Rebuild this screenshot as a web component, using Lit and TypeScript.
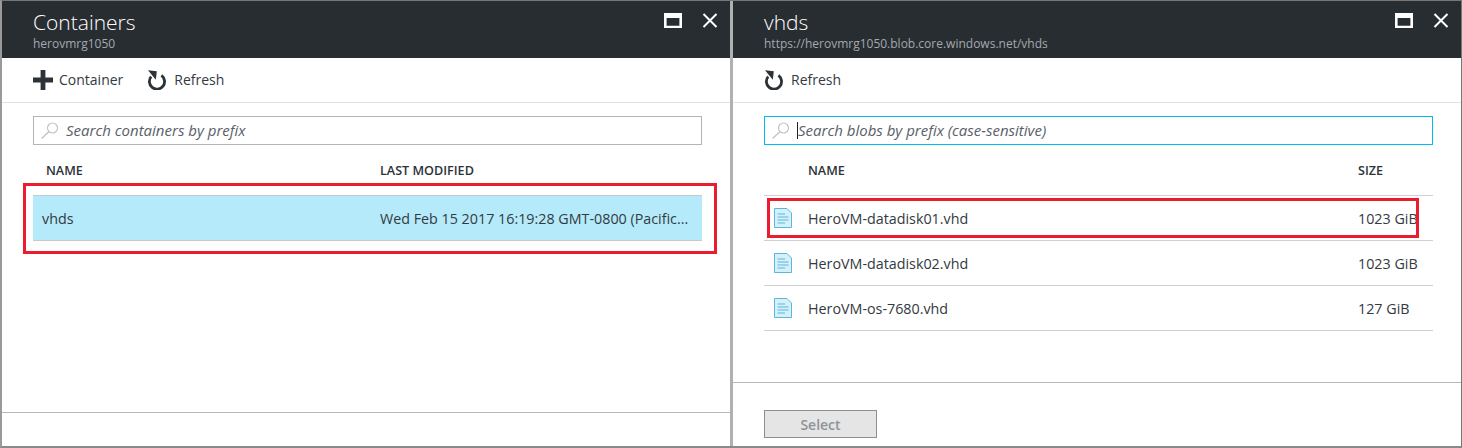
import { LitElement, html, css, svg } from 'lit';
import { customElement } from 'lit/decorators.js';

const refreshIcon = html`<svg class="tool-icon" viewBox="0 0 20 20"><path d="M14.4 5.4 A7.6 7.6 0 1 1 4.2 6.6" fill="none" stroke="#2b3238" stroke-width="2.8"/><path d="M1 .2 L9.8 1.2 L8.8 9.8 Z" fill="#2b3238"/></svg>`;
const plusIcon = html`<svg class="tool-icon" viewBox="0 0 20 20"><path d="M7.6 0H12.4V7.6H20V12.4H12.4V20H7.6V12.4H0V7.6H7.6Z" fill="#2b3238"/></svg>`;
const searchIcon = html`<svg class="search-icon" viewBox="0 0 18 18"><circle cx="11.5" cy="6" r="5" fill="none" stroke="#c4c4c4" stroke-width="1.2"/><path d="M7.8 9.8 L.6 16.6" stroke="#c4c4c4" stroke-width="1.4"/></svg>`;
const maxIcon = svg`<path d="M0 0H18V15H0ZM2.6 5V12.7H15.4V5Z" fill="#fff" fill-rule="evenodd"/>`;
const fileIcon = html`<svg class="file-icon" viewBox="0 0 18 20"><path d="M.5.5H13L17.5 5V19.5H.5Z" fill="#d6f0fa" stroke="#5ab7de"/><path d="M3.5 6H11M3.5 9H14.5M3.5 12H14.5M3.5 15H11" stroke="#5ab7de"/></svg>`;

const blobs = [
  ['HeroVM-datadisk01.vhd', '1023 GiB'],
  ['HeroVM-datadisk02.vhd', '1023 GiB'],
  ['HeroVM-os-7680.vhd', '127 GiB'],
];

@customElement('app-root')
export class AppRoot extends LitElement {
  static override styles = css`
    :host {
      display: block;
      position: relative;
      width: 1462px;
      height: 448px;
      box-sizing: border-box;
      overflow: hidden;
      background: #fff;
      color: #333a42;
      font-family: "Open Sans", "Noto Sans", sans-serif;
      font-size: 14.3px;
      border-top: 1px solid #777;
      border-left: 2px solid #9a9a9a;
      border-right: 1px solid #777;
      border-bottom: 2px solid #8a8a8a;
    }
    .blades {
      display: grid;
      grid-template-columns: 728px 3px 1fr;
      height: 100%;
    }
    .sep { background: #b0b0b0; }
    .blade { display: flex; flex-direction: column; min-width: 0; }
    .head {
      height: 57px;
      box-sizing: border-box;
      background: #282d32;
      padding: 8px 12px 0 31px;
      display: flex;
      justify-content: space-between;
      flex: none;
    }
    .title { color: #fff; font-size: 21px; line-height: 27px; font-weight: 300; }
    .sub { color: #a4a9ad; font-size: 12px; line-height: 15px; }
    .actions { display: flex; gap: 20px; padding-top: 4px; }
    .max { width: 18px; height: 15px; display: block; }
    .close { width: 16px; height: 15px; display: block; }
    .toolbar {
      height: 45px;
      box-sizing: border-box;
      border-bottom: 1px solid #e2e2e2;
      display: flex;
      align-items: center;
      gap: 24px;
      padding-left: 31px;
      flex: none;
    }
    .tool { display: flex; align-items: center; gap: 6px; font-size: 14px; }
    .tool.refresh { gap: 7px; }
    .tool span { margin-top: -2px; }
    .tool-icon { width: 20px; height: 20px; }
    .search {
      margin: 13px 28px 0 31px;
      height: 29px;
      box-sizing: border-box;
      border: 1px solid #b4b4b4;
      display: flex;
      align-items: center;
      padding-left: 7px;
      gap: 7px;
      font-style: italic;
      color: #5a6068;
      font-size: 15px;
      flex: none;
    }
    .search span { margin-top: -2px; }
    .right .search { border: 1px solid #00bcf2; }
    .search-icon { width: 18px; height: 18px; flex: none; }
    .caret { width: 1px; height: 17px; background: #222; margin-right: -7px; }
    .cols {
      display: grid;
      height: 50px;
      align-items: center;
      font-weight: 600;
      font-size: 12.6px;
      color: #2b3238;
      flex: none;
      padding-top: 1px;
      box-sizing: border-box;
    }
    .left .cols { grid-template-columns: 334px 1fr; margin: 0 28px 0 31px; padding-left: 13px; }
    .right .cols { grid-template-columns: 550px 1fr; margin: 0 28px 0 31px; padding-left: 44px; }
    .row-sel {
      margin: 0 28px 0 31px;
      height: 46px;
      box-sizing: border-box;
      background: #b4eafa;
      border-top: 1px solid #c8c8c8;
      border-bottom: 1px solid #c8c8c8;
      display: grid;
      grid-template-columns: 338px 1fr;
      align-items: center;
      padding-left: 9px;
      flex: none;
    }
    .rows { margin: 0 28px 0 31px; border-top: 1px solid #d0d0d0; flex: none; }
    .row {
      height: 45px;
      box-sizing: border-box;
      border-bottom: 1px solid #d0d0d0;
      display: grid;
      grid-template-columns: 34px 550px 1fr;
      align-items: center;
      padding-left: 10px;
    }
    .file-icon { width: 18px; height: 20px; display: block; }
    .spacer { flex: 1; }
    .foot { border-top: 1px solid #b8b8b8; flex: none; box-sizing: border-box; }
    .left .foot { height: 34px; }
    .right .foot { height: 64px; padding: 27px 0 0 31px; }
    .btn {
      width: 113px;
      height: 28px;
      box-sizing: border-box;
      background: #e5e5e5;
      border: 1px solid #8f8f8f;
      color: #8d9499;
      font-weight: 600;
      font-size: 14px;
      display: flex;
      align-items: center;
      justify-content: center;
    }
    .mark { position: absolute; box-sizing: border-box; border: 3px solid #ea1c2d; pointer-events: none; }
    .mark-a { left: 21px; top: 182px; width: 694px; height: 71px; }
    .mark-b { left: 765px; top: 197px; width: 652px; height: 40px; }
  `;

  private head(title: string, sub: string) {
    return html`<div class="head">
      <div>
        <div class="title">${title}</div>
        <div class="sub">${sub}</div>
      </div>
      <div class="actions">
        <svg class="max" viewBox="0 0 18 15">${maxIcon}</svg>
        <svg class="close" viewBox="0 0 16 15"><path d="M1.5 1 L14.5 14 M14.5 1 L1.5 14" stroke="#fff" stroke-width="2" fill="none"/></svg>
      </div>
    </div>`;
  }

  override render() {
    return html`
      <div class="blades">
        <section class="blade left">
          ${this.head('Containers', 'herovmrg1050')}
          <div class="toolbar">
            <div class="tool">${plusIcon}<span>Container</span></div>
            <div class="tool refresh">${refreshIcon}<span>Refresh</span></div>
          </div>
          <div class="search">${searchIcon}<span>Search containers by prefix</span></div>
          <div class="cols"><span>NAME</span><span>LAST MODIFIED</span></div>
          <div class="row-sel">
            <span>vhds</span>
            <span>Wed Feb 15 2017 16:19:28 GMT-0800 (Pacific...</span>
          </div>
          <div class="spacer"></div>
          <div class="foot"></div>
        </section>
        <div class="sep"></div>
        <section class="blade right">
          ${this.head('vhds', 'https://herovmrg1050.blob.core.windows.net/vhds')}
          <div class="toolbar">
            <div class="tool refresh">${refreshIcon}<span>Refresh</span></div>
          </div>
          <div class="search">${searchIcon}<i class="caret"></i><span>Search blobs by prefix (case-sensitive)</span></div>
          <div class="cols"><span>NAME</span><span>SIZE</span></div>
          <div class="rows">
            ${blobs.map(([name, size]) => html`<div class="row">
              ${fileIcon}<span>${name}</span><span>${size}</span>
            </div>`)}
          </div>
          <div class="spacer"></div>
          <div class="foot"><div class="btn">Select</div></div>
        </section>
      </div>
      <div class="mark mark-a"></div>
      <div class="mark mark-b"></div>
    `;
  }
}
